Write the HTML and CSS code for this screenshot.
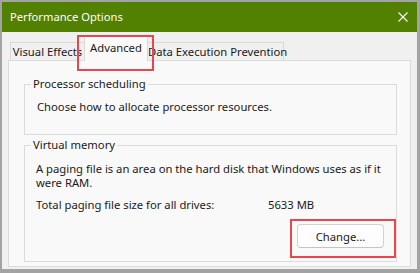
FILE: index.html
```html
<!DOCTYPE html>
<html>
<head>
<meta charset="utf-8">
<link rel="stylesheet" href="styles.css">
</head>
<body>
<div class="window">
  <div class="titlebar">
    <span class="title">Performance Options</span>
    <svg class="close" width="10" height="10" viewBox="0 0 10 10"><path d="M0.5 0.5L9.5 9.5M9.5 0.5L0.5 9.5" stroke="#fff" stroke-width="1.1" fill="none"/></svg>
  </div>
  <div class="content">
    <div class="tabs">
      <div class="tab tab-visual">Visual Effects</div>
      <div class="tab tab-adv active">Advanced</div>
      <div class="tab tab-dep">Data Execution Prevention</div>
    </div>
    <div class="panel">
      <fieldset class="group group-cpu">
        <legend>Processor scheduling</legend>
        <p class="line">Choose how to allocate processor resources.</p>
      </fieldset>
      <fieldset class="group group-vm">
        <legend>Virtual memory</legend>
        <p class="desc">A paging file is an area on the hard disk that Windows uses as if it<br>were RAM.</p>
        <div class="size-row">
          <span>Total paging file size for all drives:</span>
          <span class="value">5633 MB</span>
        </div>
        <div class="actions">
          <button class="btn">Change...</button>
        </div>
      </fieldset>
    </div>
  </div>
</div>
</body>
</html>
```

FILE: styles.css
```css
* { box-sizing: border-box; }
html, body { margin: 0; padding: 0; }
body {
  width: 420px;
  height: 273px;
  background: #a0a0a0;
  font-family: "Noto Sans", "Open Sans", sans-serif;
  font-size: 11.25px;
  color: #1a1a1a;
}
.window {
  width: 420px;
  height: 273px;
  border-style: solid;
  border-color: #a3a3a3;
  border-width: 2px 3px 4px 2px;
  background: #f0f0f0;
  display: flex;
  flex-direction: column;
}
.titlebar {
  height: 30px;
  background: #528000;
  color: #fff;
  display: flex;
  align-items: center;
  justify-content: space-between;
  padding: 0 9px 0 8px;
  flex: none;
}
.title {
  font-size: 11.2px;
  line-height: 16px;
}
.close { display: block; }
.content {
  flex: 1;
  display: flex;
  flex-direction: column;
  padding: 4px 6px 2px 6px;
}
.tabs {
  display: flex;
  align-items: flex-end;
  height: 24px;
  padding-left: 2px;
  position: relative;
  z-index: 1;
}
.tab {
  height: 18px;
  border: 1px solid #d9d9d9;
  border-bottom: none;
  background: #f0f0f0;
  text-align: center;
  line-height: 17px;
  white-space: nowrap;
}
.tab-visual { width: 75px; margin-right: -1px; }
.tab-adv { width: 64px; }
.tab-dep { width: 137px; margin-left: -1px; }
.tab.active {
  height: 25px;
  margin-bottom: -1px;
  background: #f9f9f9;
  line-height: 22px;
  position: relative;
  z-index: 2;
}
.tab.active::after {
  content: "";
  position: absolute;
  left: -8px;
  top: -2px;
  width: 73px;
  height: 32px;
  border: 2px solid #e9474f;
}
.panel {
  flex: 1;
  background: #f9f9f9;
  border: 1px solid #dcdcdc;
  padding: 15px 13px 4px 15px;
  display: flex;
  flex-direction: column;
}
.group {
  margin: 0;
  border: 1px solid #dcdcdc;
  padding: 0 12px 0 11px;
  min-width: 0;
}
.group legend {
  margin-left: -5px;
  padding: 0 2px;
  line-height: 16px;
}
.group p { margin: 0; line-height: 14px; }
.group-cpu { height: 59px; }
.group-cpu .line { margin-top: 8px; padding-left: 1px; }
.group-vm { margin-top: 2px; flex: 1; }
.group-vm .desc { margin-top: 9px; white-space: nowrap; }
.size-row {
  display: grid;
  grid-template-columns: 232px auto;
  margin-top: 8px;
  line-height: 14px;
}
.actions {
  display: flex;
  justify-content: flex-end;
  margin-top: 12px;
}
.btn {
  position: relative;
  width: 87px;
  height: 24px;
  font-family: inherit;
  font-size: 11.25px;
  color: #1a1a1a;
  background: #fdfdfd;
  border: 1px solid #d3d3d3;
  border-bottom-color: #c4c4c4;
  border-radius: 4px;
  padding: 0;
}
.btn::after {
  content: "";
  position: absolute;
  left: -8px;
  top: -6px;
  width: 102px;
  height: 35px;
  border: 2px solid #e9474f;
}
```
